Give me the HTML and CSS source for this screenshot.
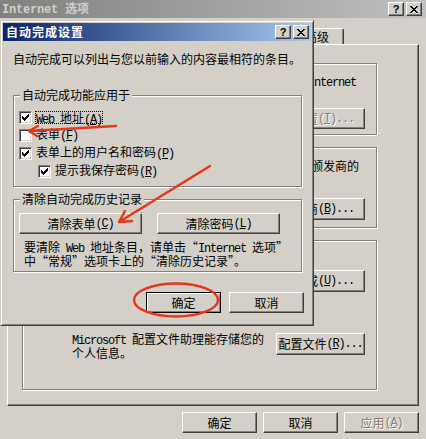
FILE: index.html
```html
<!DOCTYPE html>
<html>

<head>
    <meta charset="utf-8">
    <title>自动完成设置</title>
    <link rel="stylesheet" href="styles.css">
</head>

<body>
    <!-- Internet 选项 (the window behind, mostly covered) -->
    <div class="window">
        <div class="caption inactive">
            <span class="caption-text"><span class="en">Internet </span>选项</span>
            <div class="caption-buttons">
                <span class="cap-btn">?</span>
                <span class="cap-btn">
                    <svg width="8" height="7" viewBox="0 0 8 7" shape-rendering="crispEdges"><path d="M0 0h2v1h-2z M6 0h2v1h-2z M1 1h2v1h-2z M5 1h2v1h-2z M2 2h4v1h-4z M3 3h2v1h-2z M2 4h4v1h-4z M1 5h2v1h-2z M5 5h2v1h-2z M0 6h2v1h-2z M6 6h2v1h-2z" fill="#000"/></svg>
                </span>
            </div>
        </div>

        <div class="tabs">
            <span class="tab"></span>
            <span class="tab"></span>
            <span class="tab"></span>
            <span class="tab"></span>
            <span class="tab"></span>
            <span class="tab"></span>
            <span class="tab last">高级</span>
        </div>

        <div class="panel">
            <div class="group g-rating">
                <div class="group-text t-rating"><span class="en">Internet</span></div>
                <div class="group-buttons">
                    <span class="btn b-rating disabled">设置<span class="en">(<u>T</u>)...</span></span>
                </div>
            </div>

            <div class="group g-cert">
                <div class="group-text t-cert">颁发商的</div>
                <div class="group-buttons">
                    <span class="btn b-cert">发行商<span class="en">(<u>B</u>)...</span></span>
                </div>
            </div>

            <div class="group g-personal">
                <div class="group-row r-auto">
                    <span class="btn b-auto">自动完成<span class="en">(<u>U</u>)...</span></span>
                </div>
                <div class="group-row r-profile">
                    <div class="group-text t-profile"><span class="en">Microsoft </span>配置文件助理能存储您的<br>个人信息。</div>
                    <span class="btn b-profile">配置文件<span class="en">(<u>R</u>)...</span></span>
                </div>
            </div>
        </div>

        <div class="window-buttons">
            <span class="btn">确定</span>
            <span class="btn">取消</span>
            <span class="btn disabled">应用<span class="en">(<u>A</u>)</span></span>
        </div>
    </div>

    <!-- 自动完成设置 dialog, on top -->
    <div class="dialog">
        <div class="caption active">
            <span class="caption-text">自动完成设置</span>
            <div class="caption-buttons">
                <span class="cap-btn">?</span>
                <span class="cap-btn">
                    <svg width="8" height="7" viewBox="0 0 8 7" shape-rendering="crispEdges"><path d="M0 0h2v1h-2z M6 0h2v1h-2z M1 1h2v1h-2z M5 1h2v1h-2z M2 2h4v1h-4z M3 3h2v1h-2z M2 4h4v1h-4z M1 5h2v1h-2z M5 5h2v1h-2z M0 6h2v1h-2z M6 6h2v1h-2z" fill="#000"/></svg>
                </span>
            </div>
        </div>

        <div class="dialog-body">
            <p class="intro">自动完成可以列出与您以前输入的内容最相符的条目。</p>

            <div class="group g-use">
                <div class="group-label">自动完成功能应用于</div>
                <div class="check-row first">
                    <span class="checkbox checked"><svg width="7" height="7" viewBox="0 0 7 7" shape-rendering="crispEdges"><path d="M0 2h1v3h-1z M1 3h1v3h-1z M2 4h1v3h-1z M3 3h1v3h-1z M4 2h1v3h-1z M5 1h1v3h-1z M6 0h1v3h-1z" fill="#000"/></svg></span>
                    <span class="check-label focus"><span class="en">Web </span>地址<span class="en">(<u>A</u>)</span></span>
                </div>
                <div class="check-row">
                    <span class="checkbox"></span>
                    <span class="check-label">表单<span class="en">(<u>F</u>)</span></span>
                </div>
                <div class="check-row">
                    <span class="checkbox checked"><svg width="7" height="7" viewBox="0 0 7 7" shape-rendering="crispEdges"><path d="M0 2h1v3h-1z M1 3h1v3h-1z M2 4h1v3h-1z M3 3h1v3h-1z M4 2h1v3h-1z M5 1h1v3h-1z M6 0h1v3h-1z" fill="#000"/></svg></span>
                    <span class="check-label">表单上的用户名和密码<span class="en">(<u>P</u>)</span></span>
                </div>
                <div class="check-row sub">
                    <span class="checkbox checked"><svg width="7" height="7" viewBox="0 0 7 7" shape-rendering="crispEdges"><path d="M0 2h1v3h-1z M1 3h1v3h-1z M2 4h1v3h-1z M3 3h1v3h-1z M4 2h1v3h-1z M5 1h1v3h-1z M6 0h1v3h-1z" fill="#000"/></svg></span>
                    <span class="check-label">提示我保存密码<span class="en">(<u>R</u>)</span></span>
                </div>
            </div>

            <div class="group g-clear">
                <div class="group-label">清除自动完成历史记录</div>
                <div class="clear-buttons">
                    <span class="btn wide">清除表单<span class="en">(<u>C</u>)</span></span>
                    <span class="btn wide">清除密码<span class="en">(<u>L</u>)</span></span>
                </div>
                <p class="note">要清除<span class="en"> Web </span>地址条目，请单击“<span class="en">Internet </span>选项”<br>中“常规”选项卡上的“清除历史记录”。</p>
            </div>

            <div class="dialog-buttons">
                <span class="btn default">确定</span>
                <span class="btn">取消</span>
            </div>
        </div>
    </div>

    <!-- red marks drawn over the screenshot -->
    <svg class="marks" width="426" height="439" viewBox="0 0 426 439">
        <g fill="none" stroke="#e4381c" stroke-width="2.4" stroke-linecap="round" stroke-linejoin="round">
            <path d="M116 126 L30 131 M38 126 L29 131 L37 136" />
            <path d="M210 166 L119 222 M132 221 L119 222 L125 211" />
            <ellipse cx="176" cy="300" rx="42" ry="16.5" />
        </g>
    </svg>
</body>

</html>
```

FILE: styles.css
```css
/* Basic styling */
body {
    margin: 0;
    width: 426px;
    height: 439px;
    overflow: hidden;
    position: relative;
    background: #d4d0c8;
    font-family: "Noto Sans CJK SC", sans-serif;
    font-size: 12px;
    line-height: 12px;
    color: #000;
}

/* Latin runs, half width like SimSun */
.en {
    font-family: "Liberation Mono", monospace;
    font-size: 12px;
    letter-spacing: -1.2px;
}

p {
    margin: 0;
}

/* Title bars */
.caption {
    height: 18px;
    display: flex;
    align-items: center;
    justify-content: space-between;
    font-weight: bold;
    white-space: nowrap;
}

.caption.inactive {
    background: linear-gradient(to right, #808080, #c0c0c0);
    color: #d4d0c8;
    padding: 0 4px 0 2px;
}

.caption.inactive .en {
    letter-spacing: -0.2px;
}

.caption.active {
    background: linear-gradient(to right, #0a246a, #a6caf0);
    color: #fff;
    padding: 0 2px 0 3px;
    letter-spacing: 1px;
}

.caption-buttons {
    display: flex;
    gap: 2px;
}

.cap-btn {
    width: 16px;
    height: 14px;
    box-sizing: border-box;
    display: flex;
    align-items: center;
    justify-content: center;
    background: #d4d0c8;
    border: 1px solid;
    border-color: #fff #404040 #404040 #fff;
    box-shadow: inset -1px -1px #808080;
    font-family: "Liberation Sans", sans-serif;
    font-size: 11px;
    font-weight: bold;
    color: #000;
    letter-spacing: 0;
}

/* Tabs */
.tabs {
    display: flex;
    align-items: flex-end;
    height: 18px;
    margin-top: 8px;
    padding-left: 10px;
}

.tab {
    width: 48px;
    height: 16px;
    box-sizing: border-box;
    border: 1px solid;
    border-bottom: 0;
    border-color: #fff #404040 #404040 #fff;
    border-radius: 2px 2px 0 0;
    box-shadow: inset -1px 0 #808080;
    padding-left: 6px;
    line-height: 15px;
}

.tab.last {
    width: 46px;
}

/* Tab page */
.panel {
    margin: 0 7px;
    height: 362px;
    box-sizing: border-box;
    border: 1px solid;
    border-color: #fff #404040 #404040 #fff;
    box-shadow: inset -1px -1px #808080;
    padding: 18px 41px 0 14px;
    display: flex;
    flex-direction: column;
    gap: 12px;
}

/* Etched group box */
.group {
    box-sizing: border-box;
    border: 1px solid #808080;
    box-shadow: inset 1px 1px #fff, 1px 1px #fff;
}

.group-label {
    width: fit-content;
    height: 12px;
    margin: -7px 0 -5px 6px;
    padding: 0 2px;
    background: #d4d0c8;
}

.group-text {
    white-space: nowrap;
}

.group-buttons {
    display: flex;
    justify-content: flex-end;
    gap: 6px;
    padding-right: 11px;
}

.group-row {
    display: flex;
    justify-content: space-between;
    align-items: flex-start;
    padding-right: 11px;
}

.g-rating {
    height: 72px;
}

.t-rating {
    margin: 11px 20px 0 0;
    text-align: right;
}

.g-rating .group-buttons {
    margin-top: 19px;
}

.g-cert {
    height: 81px;
}

.t-cert {
    margin: 12px 17px 0 0;
    text-align: right;
}

.g-cert .group-buttons {
    margin-top: 26px;
}

.g-personal {
    height: 150px;
}

.r-auto {
    margin-top: 29px;
    justify-content: flex-end;
}

.r-profile {
    margin-top: 41px;
}

.t-profile {
    margin-left: 49px;
}

/* Push buttons */
.btn {
    display: flex;
    align-items: center;
    justify-content: center;
    width: 75px;
    height: 21px;
    box-sizing: border-box;
    background: #d4d0c8;
    border: 1px solid;
    border-color: #fff #404040 #404040 #fff;
    box-shadow: inset -1px -1px #808080;
    white-space: nowrap;
}

.btn.disabled {
    color: #808080;
    text-shadow: 1px 1px #fff;
}

.btn.default {
    border-color: #000;
    box-shadow: inset 1px 1px #fff, inset -1px -1px #808080;
}

.b-rating {
    width: 82px;
}

.b-cert {
    width: 94px;
    height: 22px;
}

.b-auto {
    width: 106px;
    height: 22px;
}

.b-profile {
    width: 89px;
    height: 22px;
}

.window-buttons {
    display: flex;
    justify-content: flex-end;
    gap: 6px;
    margin: 6px 7px 0 0;
}

/* Auto complete dialog */
.dialog {
    position: absolute;
    left: 0;
    top: 20px;
    width: 314px;
    height: 306px;
    box-sizing: border-box;
    border: 1px solid;
    border-color: #d4d0c8 #404040 #404040 #d4d0c8;
    box-shadow: inset 1px 1px #fff, inset -1px -1px #808080;
    padding: 2px;
    background: #d4d0c8;
}

.dialog-body {
    padding: 0 9px 0 10px;
}

.intro {
    margin-top: 12px;
    white-space: nowrap;
}

.g-use {
    margin-top: 30px;
    height: 92px;
}

.check-row {
    display: flex;
    align-items: center;
    height: 18px;
    padding-left: 5px;
}

.check-row.first {
    margin-top: 12px;
}

.check-row.sub {
    padding-left: 24px;
}

.checkbox {
    width: 13px;
    height: 13px;
    box-sizing: border-box;
    display: flex;
    align-items: center;
    justify-content: center;
    background: #fff;
    border: 1px solid;
    border-color: #808080 #fff #fff #808080;
    box-shadow: inset 1px 1px #404040, inset -1px -1px #d4d0c8;
}

.check-label {
    margin-left: 4px;
    white-space: nowrap;
}

.check-label.focus {
    display: inline-block;
    height: 11px;
    line-height: 11px;
    outline: 1px dotted #000;
}

.g-clear {
    margin-top: 12px;
    height: 73px;
}

.clear-buttons {
    display: flex;
    gap: 15px;
    margin-top: 13px;
    padding-left: 5px;
}

.btn.wide {
    width: 123px;
}

.note {
    margin: 7px 0 0 10px;
    white-space: nowrap;
}

.dialog-buttons {
    display: flex;
    justify-content: flex-end;
    gap: 8px;
    margin: 20px -2px 0 0;
}

/* Red annotations */
.marks {
    position: absolute;
    left: 0;
    top: 0;
    pointer-events: none;
}
```
